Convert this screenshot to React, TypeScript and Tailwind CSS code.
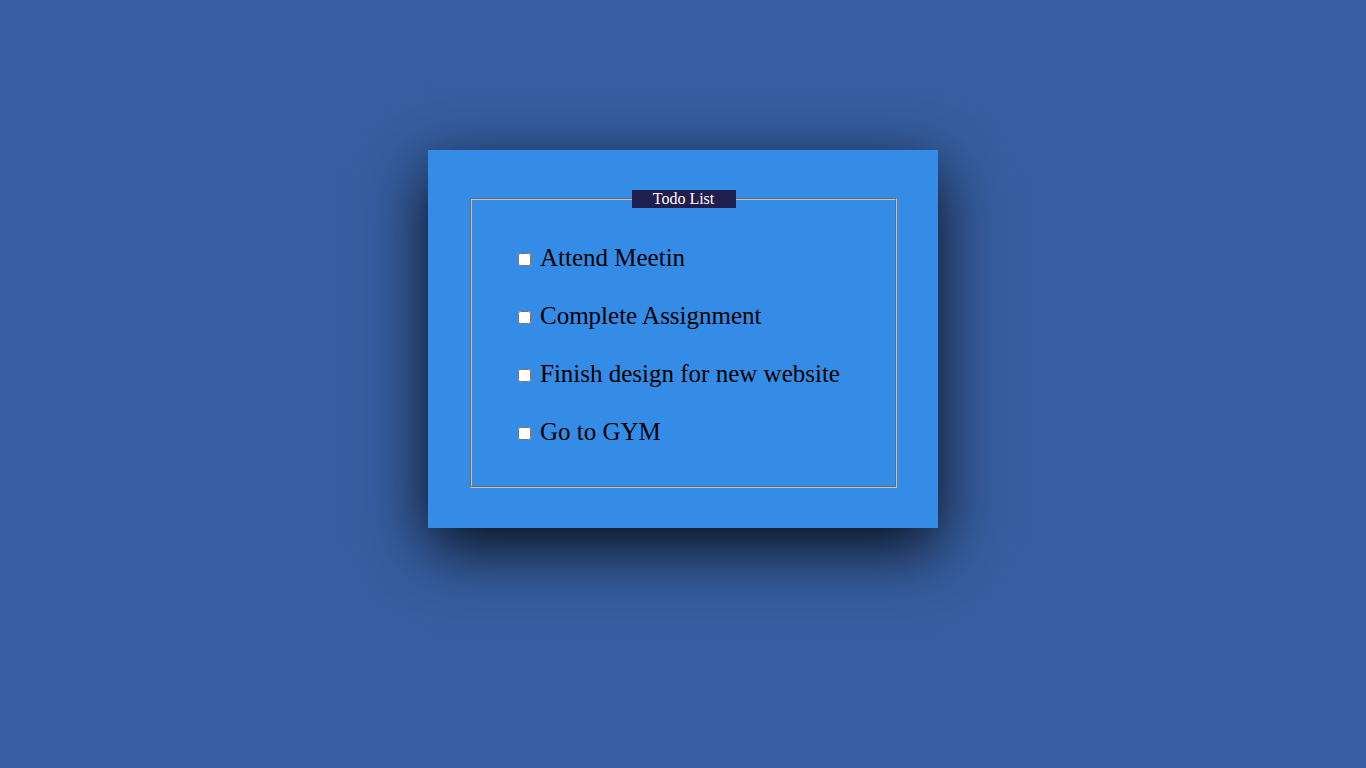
const todos = ['Attend Meetin', 'Complete Assignment', 'Finish design for new website', 'Go to GYM']

export default function App() {
  return (
    <div className="min-h-screen bg-[#365ea0] pt-[150px] font-['Liberation_Serif',serif]">
      <div className="mx-auto w-[510px] h-[378px] bg-[#358ce6] pt-[40px] pl-[42px] pr-[41px] shadow-[0_20px_60px_rgba(0,0,0,0.85)]">
        <fieldset className="h-[298px] border-2 [border-style:groove] border-[#c0c0c0]">
          <legend className="mx-auto w-[104px] bg-[#1e1e4f] text-center text-[16px] leading-[18px] text-white">
            Todo List
          </legend>
          <div className="flex flex-col gap-[30px] pt-[36px] pl-[46px]">
            {todos.map((t) => (
              <label key={t} className="flex items-center h-[28px] text-[25px] text-black">
                <input type="checkbox" className="w-[13px] h-[13px] mr-[9px] mt-[2px]" />
                {t}
              </label>
            ))}
          </div>
        </fieldset>
      </div>
    </div>
  )
}
